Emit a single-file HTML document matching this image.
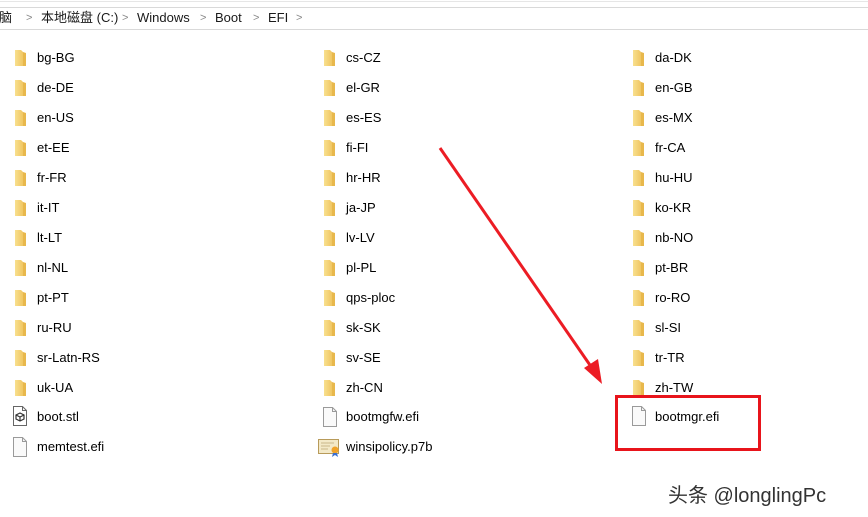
<!DOCTYPE html>
<html><head><meta charset="utf-8"><style>
body{margin:0;width:868px;height:517px;background:#fff;position:relative;overflow:hidden;font-family:"Liberation Sans","Noto Sans CJK SC",sans-serif;font-size:13px;color:#000}
.a{position:absolute;white-space:nowrap}
.bc{top:10px;font-size:13px;line-height:16px;height:16px;color:#1a1a1a}
.sep{color:#888;font-size:11px;line-height:16px;top:10px}
.f{position:absolute;width:12px;height:17px}
.t{position:absolute;white-space:nowrap;line-height:16px}
</style></head><body>
<div class="a" style="left:0;top:1px;width:868px;height:1px;background:#e6e6e6"></div>
<div class="a" style="left:0;top:7px;width:868px;height:1px;background:#d9d9d9"></div>
<div class="a" style="left:0;top:29px;width:868px;height:1px;background:#d9d9d9"></div>
<div class="a bc" style="left:-14px">电脑</div>
<div class="a sep" style="left:26px">&gt;</div>
<div class="a bc" style="left:41px">本地磁盘 (C:)</div>
<div class="a sep" style="left:122px">&gt;</div>
<div class="a bc" style="left:137px">Windows</div>
<div class="a sep" style="left:200px">&gt;</div>
<div class="a bc" style="left:215px">Boot</div>
<div class="a sep" style="left:253px">&gt;</div>
<div class="a bc" style="left:268px">EFI</div>
<div class="a sep" style="left:296px">&gt;</div>
<div id="g"></div>
<script>
var cols=[["bg-BG","de-DE","en-US","et-EE","fr-FR","it-IT","lt-LT","nl-NL","pt-PT","ru-RU","sr-Latn-RS","uk-UA"],
["cs-CZ","el-GR","es-ES","fi-FI","hr-HR","ja-JP","lv-LV","pl-PL","qps-ploc","sk-SK","sv-SE","zh-CN"],
["da-DK","en-GB","es-MX","fr-CA","hu-HU","ko-KR","nb-NO","pt-BR","ro-RO","sl-SI","tr-TR","zh-TW"]];
var xs=[14,323,632],h="";
var folder='<svg width="14" height="18" viewBox="0 0 14 18"><defs><linearGradient id="fg" x1="0" x2="1"><stop offset="0" stop-color="#f8e08e"/><stop offset="1" stop-color="#f0c663"/></linearGradient></defs><path d="M1 1h6l2 2v14H1z" fill="url(#fg)"/><path d="M9 3l3 1v13H9z" fill="#e8b84c"/></svg>';
for(var c=0;c<3;c++)for(var r=0;r<12;r++){var y=49+r*30;h+='<div class="f" style="left:'+xs[c]+'px;top:'+y+'px">'+folder+'</div><div class="t" style="left:'+(xs[c]+23)+'px;top:'+(y+1)+'px">'+cols[c][r]+'</div>';}
var file='<svg width="16" height="22" viewBox="0 0 16 22"><path d="M1.5 1.5h9l4 4v15h-13z" fill="#fafafa" stroke="#9a9a9a"/><path d="M10.5 1.5v4h4" fill="none" stroke="#9a9a9a"/></svg>';
var stl='<svg width="16" height="22" viewBox="0 0 16 22"><path d="M1.5 1.5h9l4 4v15h-13z" fill="#fff" stroke="#666"/><path d="M10.5 1.5v4h4" fill="none" stroke="#666"/><path d="M8 8l4 2v4l-4 2-4-2v-4z M4 10l4 2 4-2 M8 12v4" fill="none" stroke="#333" stroke-width="1.2"/></svg>';
var cert='<svg width="24" height="20" viewBox="0 0 24 20"><rect x="0.5" y="2.5" width="20" height="14" fill="#f3e9c8" stroke="#b89b5a"/><path d="M3 6h13M3 9h9M3 12h7" stroke="#c9b78a"/><circle cx="17" cy="13" r="3.5" fill="#f0a32a"/><path d="M15 16l-1 4 3-2 3 2-1-4" fill="#3a6fd0"/></svg>';
h+='<div class="f" style="left:12px;top:405px;width:16px;height:22px">'+stl+'</div><div class="t" style="left:37px;top:409px">boot.stl</div>';
h+='<div class="f" style="left:12px;top:436px;width:16px;height:22px">'+file+'</div><div class="t" style="left:37px;top:439px">memtest.efi</div>';
h+='<div class="f" style="left:322px;top:406px;width:16px;height:22px">'+file+'</div><div class="t" style="left:346px;top:409px">bootmgfw.efi</div>';
h+='<div class="f" style="left:318px;top:437px;width:24px;height:20px">'+cert+'</div><div class="t" style="left:346px;top:439px">winsipolicy.p7b</div>';
h+='<div class="f" style="left:631px;top:405px;width:16px;height:22px">'+file+'</div><div class="t" style="left:655px;top:409px">bootmgr.efi</div>';
document.getElementById("g").innerHTML=h;
</script>
<div class="a" style="left:615px;top:395px;width:140px;height:50px;border:3px solid #e8141b"></div>
<svg class="a" style="left:0;top:0" width="868" height="517"><line x1="440" y1="148" x2="592" y2="368" stroke="#ec1c24" stroke-width="3"/><polygon points="602,384 584,368 598,359" fill="#ec1c24"/></svg>
<div class="a" style="left:668px;top:479px;font-size:20px;color:#333;text-shadow:0 0 2px #fff">头条 @longlingPc</div>
</body></html>
